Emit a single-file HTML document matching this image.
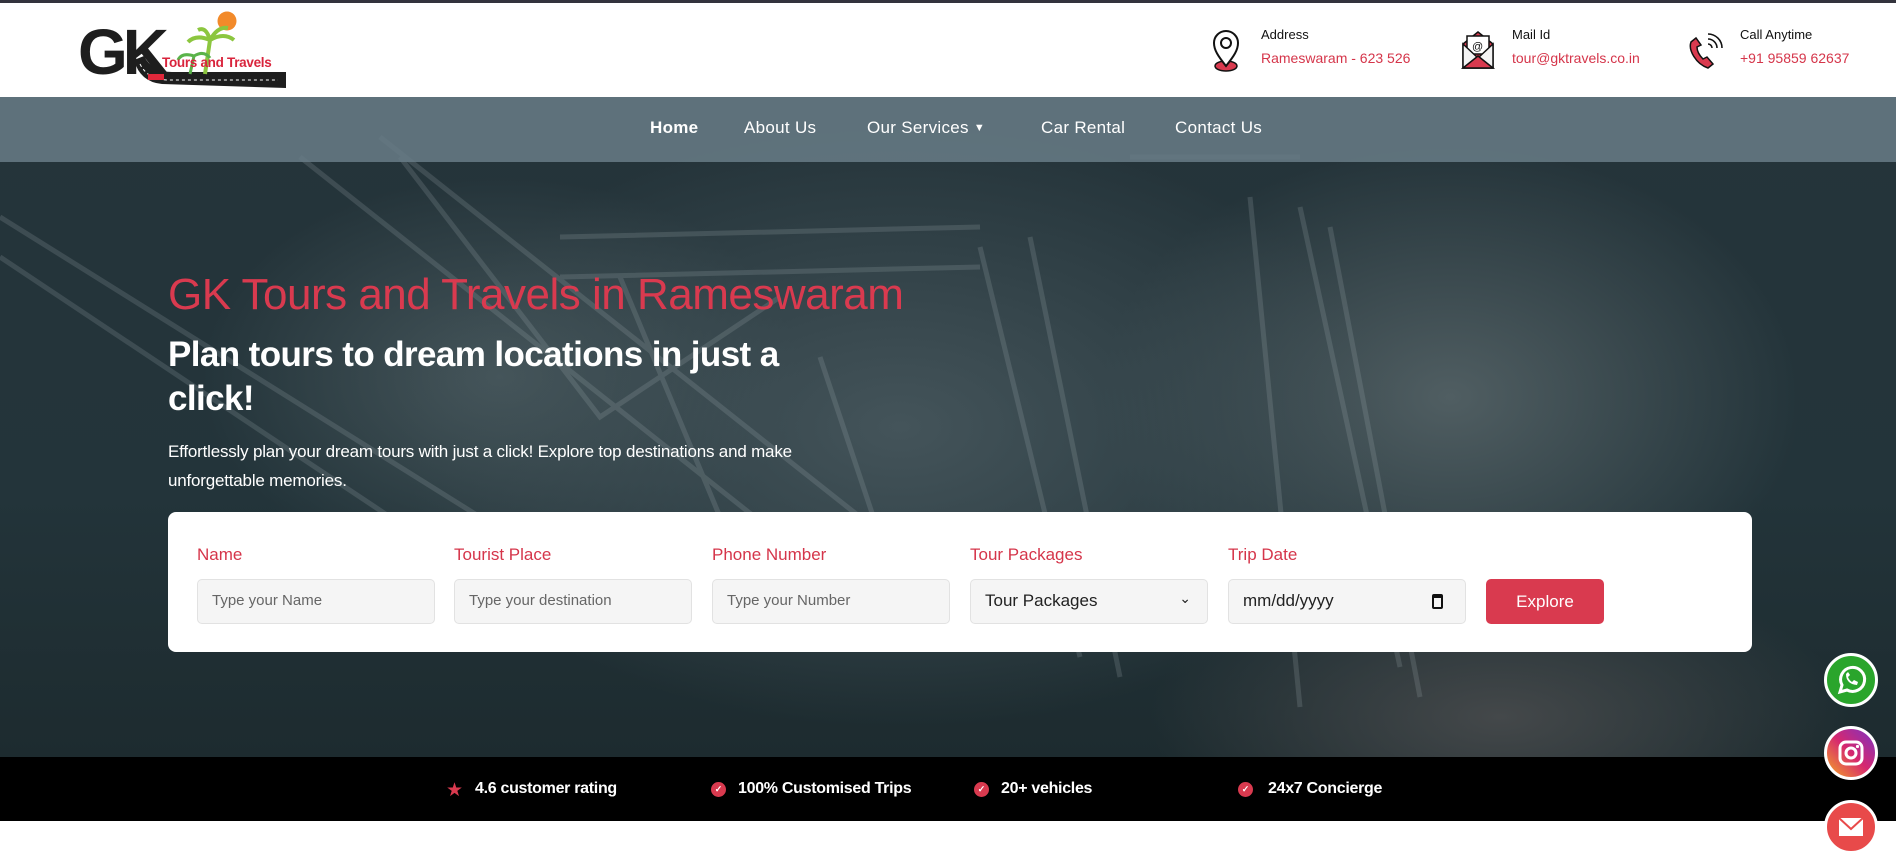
<!DOCTYPE html>
<html><head><meta charset="utf-8"><style>
*{margin:0;padding:0;box-sizing:border-box}
body{width:1896px;height:865px;overflow:hidden;font-family:"Liberation Sans",sans-serif;background:#fff;position:relative}
.abs{position:absolute}
#top{left:0;top:0;width:1896px;height:3px;background:#33333d}
#hdr{left:0;top:3px;width:1896px;height:94px;background:#fff}
#hero{left:0;top:97px;width:1896px;height:660px;overflow:hidden;
background:radial-gradient(ellipse 500px 300px at 900px 330px,#44545a 0%,rgba(60,75,80,0) 100%),
radial-gradient(ellipse 350px 250px at 1450px 300px,#505e62 0%,rgba(60,75,80,0) 100%),
radial-gradient(ellipse 300px 200px at 500px 280px,#45555a 0%,rgba(60,75,80,0) 100%),
radial-gradient(ellipse 350px 150px at 1500px 620px,#44484a 0%,rgba(60,75,80,0) 100%),
linear-gradient(180deg,#25343a 0%,#23343a 60%,#1d2b2f 100%)}
#nav{left:0;top:97px;width:1896px;height:65px;background:rgba(105,125,135,.85)}
.nv{top:118px;color:#fff;font-size:17px;letter-spacing:.3px}
.lbl{font-size:13px;color:#111}
.val{font-size:14px;color:#d5354a}
h1{position:absolute;left:168px;top:270px;color:#d93a4f;font-size:44px;font-weight:400;letter-spacing:-.5px}
h2{position:absolute;left:168px;top:333px;color:#fff;font-size:35px;font-weight:700;line-height:44px;width:700px;letter-spacing:-.6px}
p.d{position:absolute;left:168px;top:437px;color:#fff;font-size:17px;line-height:29px;width:720px;letter-spacing:-.2px}
#card{left:168px;top:512px;width:1584px;height:140px;background:#fff;border-radius:8px}
.fl{top:545px;color:#d5354a;font-size:17px}
.in{top:579px;width:238px;height:45px;background:#f5f5f5;border:1px solid #e2e2e2;border-radius:5px;font-size:15px;color:#666;padding:12px 14px}
#btn{left:1486px;top:579px;width:118px;height:45px;background:#d93a4f;border-radius:5px;color:#fff;font-size:17px;text-align:center;line-height:45px}
#bar{left:0;top:757px;width:1896px;height:64px;background:#000}
.bi{top:780px;color:#fff;font-size:16px;font-weight:700;letter-spacing:-.3px}
.ck{width:15px;height:15px;border-radius:50%;background:#d93a4f;top:782px;color:#fff;font-size:9px;text-align:center;line-height:15px;font-weight:700}
.soc{width:54px;height:54px;border-radius:50%;border:3px solid #fff;left:1824px}
</style></head><body>
<div class="abs" id="top"></div>
<div class="abs" id="hdr"></div>
<svg class="abs" style="left:78px;top:10px" width="214" height="82" viewBox="0 0 214 82">
<circle cx="149" cy="11" r="9.5" fill="#f28a2a"/>
<path d="M56 50 Q62 72 84 74 L208 78 L208 62 L94 62 Q74 62 66 46 Z" fill="#1e1e1e"/>
<path d="M62 54 Q70 70 90 70 L200 70" stroke="#fff" stroke-width="1" stroke-dasharray="3 3" fill="none"/>
<rect x="70" y="64" width="16" height="6" fill="#e0283b"/>
<path d="M127 64 L132 30 M132 30 Q118 24 110 32 M132 30 Q146 22 156 30 M132 30 Q128 16 120 20 M132 30 Q140 16 150 18" stroke="#8cc63f" stroke-width="4" fill="none"/>
<path d="M112 64 L116 46 M116 46 Q104 42 100 50 M116 46 Q126 40 132 48" stroke="#5ab34a" stroke-width="3" fill="none"/>
<text x="0" y="64" font-family="Liberation Sans" font-weight="700" font-size="64" fill="#1e1e1e" letter-spacing="-5">GK</text>
<text x="84" y="57" font-family="Liberation Sans" font-weight="700" font-size="13.5" fill="#d9243c" letter-spacing="-.3">Tours and Travels</text>
</svg>
<svg class="abs" style="left:1210px;top:28px" width="32" height="44" viewBox="0 0 32 44"><ellipse cx="16" cy="38" rx="11" ry="5" fill="#d93a4f" stroke="#111" stroke-width="1.5"/><path d="M16 38 C8 28 4 22 4 15 A12 12 0 0 1 28 15 C28 22 24 28 16 38Z" fill="#fff" stroke="#111" stroke-width="2"/><circle cx="16" cy="15" r="5" fill="none" stroke="#111" stroke-width="2"/></svg>
<div class="abs lbl" style="left:1261px;top:27px">Address</div>
<div class="abs val" style="left:1261px;top:50px">Rameswaram - 623 526</div>
<svg class="abs" style="left:1461px;top:30px" width="34" height="40" viewBox="0 0 34 40"><path d="M2 14 L17 2 L32 14 V38 H2 Z" fill="#d93a4f" stroke="#111" stroke-width="1.5"/><rect x="6" y="6" width="22" height="18" fill="#fff" stroke="#111" stroke-width="1.5"/><text x="11" y="20" font-size="11" font-family="Liberation Sans" fill="#111">@</text><path d="M2 14 L17 28 L32 14 V38 H2Z" fill="#f4f4f4" stroke="#111" stroke-width="1.5"/><path d="M2 38 L17 26 L32 38Z" fill="#d93a4f" stroke="#111" stroke-width="1.5"/></svg>
<div class="abs lbl" style="left:1512px;top:27px">Mail Id</div>
<div class="abs val" style="left:1512px;top:50px">tour@gktravels.co.in</div>
<svg class="abs" style="left:1688px;top:30px" width="36" height="40" viewBox="0 0 36 40"><path d="M8 8 L3 12 C0 20 8 34 20 38 L25 34 L19 27 L15 29 C11 25 9 21 9 17 L13 15 Z" fill="#d93a4f" stroke="#111" stroke-width="1.5"/><path d="M20 14 A4 4 0 0 1 24 18 M20 9 A9 9 0 0 1 29 18 M20 4 A14 14 0 0 1 34 18" stroke="#111" stroke-width="1.6" fill="none"/></svg>
<div class="abs lbl" style="left:1740px;top:27px">Call Anytime</div>
<div class="abs val" style="left:1740px;top:50px">+91 95859 62637</div>

<div class="abs" id="hero">
<svg width="1896" height="660" style="opacity:.18">
<g stroke="#b0bcc0" stroke-width="5" fill="none">
<path d="M0 120 L560 470 M0 160 L540 520 M300 60 L780 440 M380 40 L860 420 M560 140 L980 130 M560 180 L980 170"/>
<path d="M980 150 L1080 560 M1030 140 L1120 580 M1300 110 L1400 570 M1330 130 L1420 600 M1130 60 L1300 60 M1250 100 L1300 610"/>
<path d="M400 60 L600 320 L780 200 M620 180 L720 420 M820 260 L900 500"/>
</g></svg>
</div>
<div class="abs" id="nav"></div>
<div class="abs nv" style="left:650px;font-weight:700">Home</div>
<div class="abs nv" style="left:744px">About Us</div>
<div class="abs nv" style="left:867px">Our Services <span style="font-size:11px;vertical-align:2px">▼</span></div>
<div class="abs nv" style="left:1041px">Car Rental</div>
<div class="abs nv" style="left:1175px">Contact Us</div>

<h1>GK Tours and Travels in Rameswaram</h1>
<h2>Plan tours to dream locations in just a click!</h2>
<p class="d">Effortlessly plan your dream tours with just a click! Explore top destinations and make unforgettable memories.</p>

<div class="abs" id="card"></div>
<div class="abs fl" style="left:197px">Name</div>
<div class="abs fl" style="left:454px">Tourist Place</div>
<div class="abs fl" style="left:712px">Phone Number</div>
<div class="abs fl" style="left:970px">Tour Packages</div>
<div class="abs fl" style="left:1228px">Trip Date</div>
<div class="abs in" style="left:197px">Type your Name</div>
<div class="abs in" style="left:454px">Type your destination</div>
<div class="abs in" style="left:712px">Type your Number</div>
<div class="abs in" style="left:970px;color:#222;font-size:17px;padding-top:11px">Tour Packages<span style="position:absolute;right:16px;top:10px;font-size:14px">&#8964;</span></div>
<div class="abs in" style="left:1228px;color:#222;font-size:17px;padding-top:11px">mm/dd/yyyy<span style="position:absolute;right:22px;top:14px;width:11px;height:15px;border:2px solid #111;border-top-width:4px;border-radius:2px"></span></div>
<div class="abs" id="btn">Explore</div>

<div class="abs" id="bar"></div>
<div class="abs" style="left:446px;top:779px;color:#d93a4f;font-size:19px">★</div>
<div class="abs bi" style="left:475px">4.6 customer rating</div>
<div class="abs ck" style="left:711px">✓</div><div class="abs bi" style="left:738px">100% Customised Trips</div>
<div class="abs ck" style="left:974px">✓</div><div class="abs bi" style="left:1001px">20+ vehicles</div>
<div class="abs ck" style="left:1238px">✓</div><div class="abs bi" style="left:1268px">24x7 Concierge</div>

<div class="abs soc" style="top:653px;background:#2aa52c"><svg width="48" height="48" viewBox="0 0 48 48"><path d="M13 36 L15 29 A12 12 0 1 1 20 34 Z" fill="none" stroke="#fff" stroke-width="3"/><path d="M19 18 Q19 28 30 29 L31 26 L27 24 L25 26 Q22 24 21 21 L23 19 L21 16Z" fill="#fff"/></svg></div>
<div class="abs soc" style="top:726px;background:linear-gradient(45deg,#f5a623,#d6286f 50%,#7b32c4)"><svg width="48" height="48" viewBox="0 0 48 48"><rect x="13" y="13" width="22" height="22" rx="6" fill="none" stroke="#fff" stroke-width="3"/><circle cx="24" cy="24" r="5" fill="none" stroke="#fff" stroke-width="3"/><circle cx="30.5" cy="17.5" r="1.6" fill="#fff"/></svg></div>
<div class="abs soc" style="top:800px;background:#e84a4a"><svg width="48" height="48" viewBox="0 0 48 48"><rect x="12" y="15" width="24" height="18" fill="#fff"/><path d="M12 15 L24 26 L36 15" stroke="#e84a4a" stroke-width="2" fill="none"/></svg></div>
</body></html>
